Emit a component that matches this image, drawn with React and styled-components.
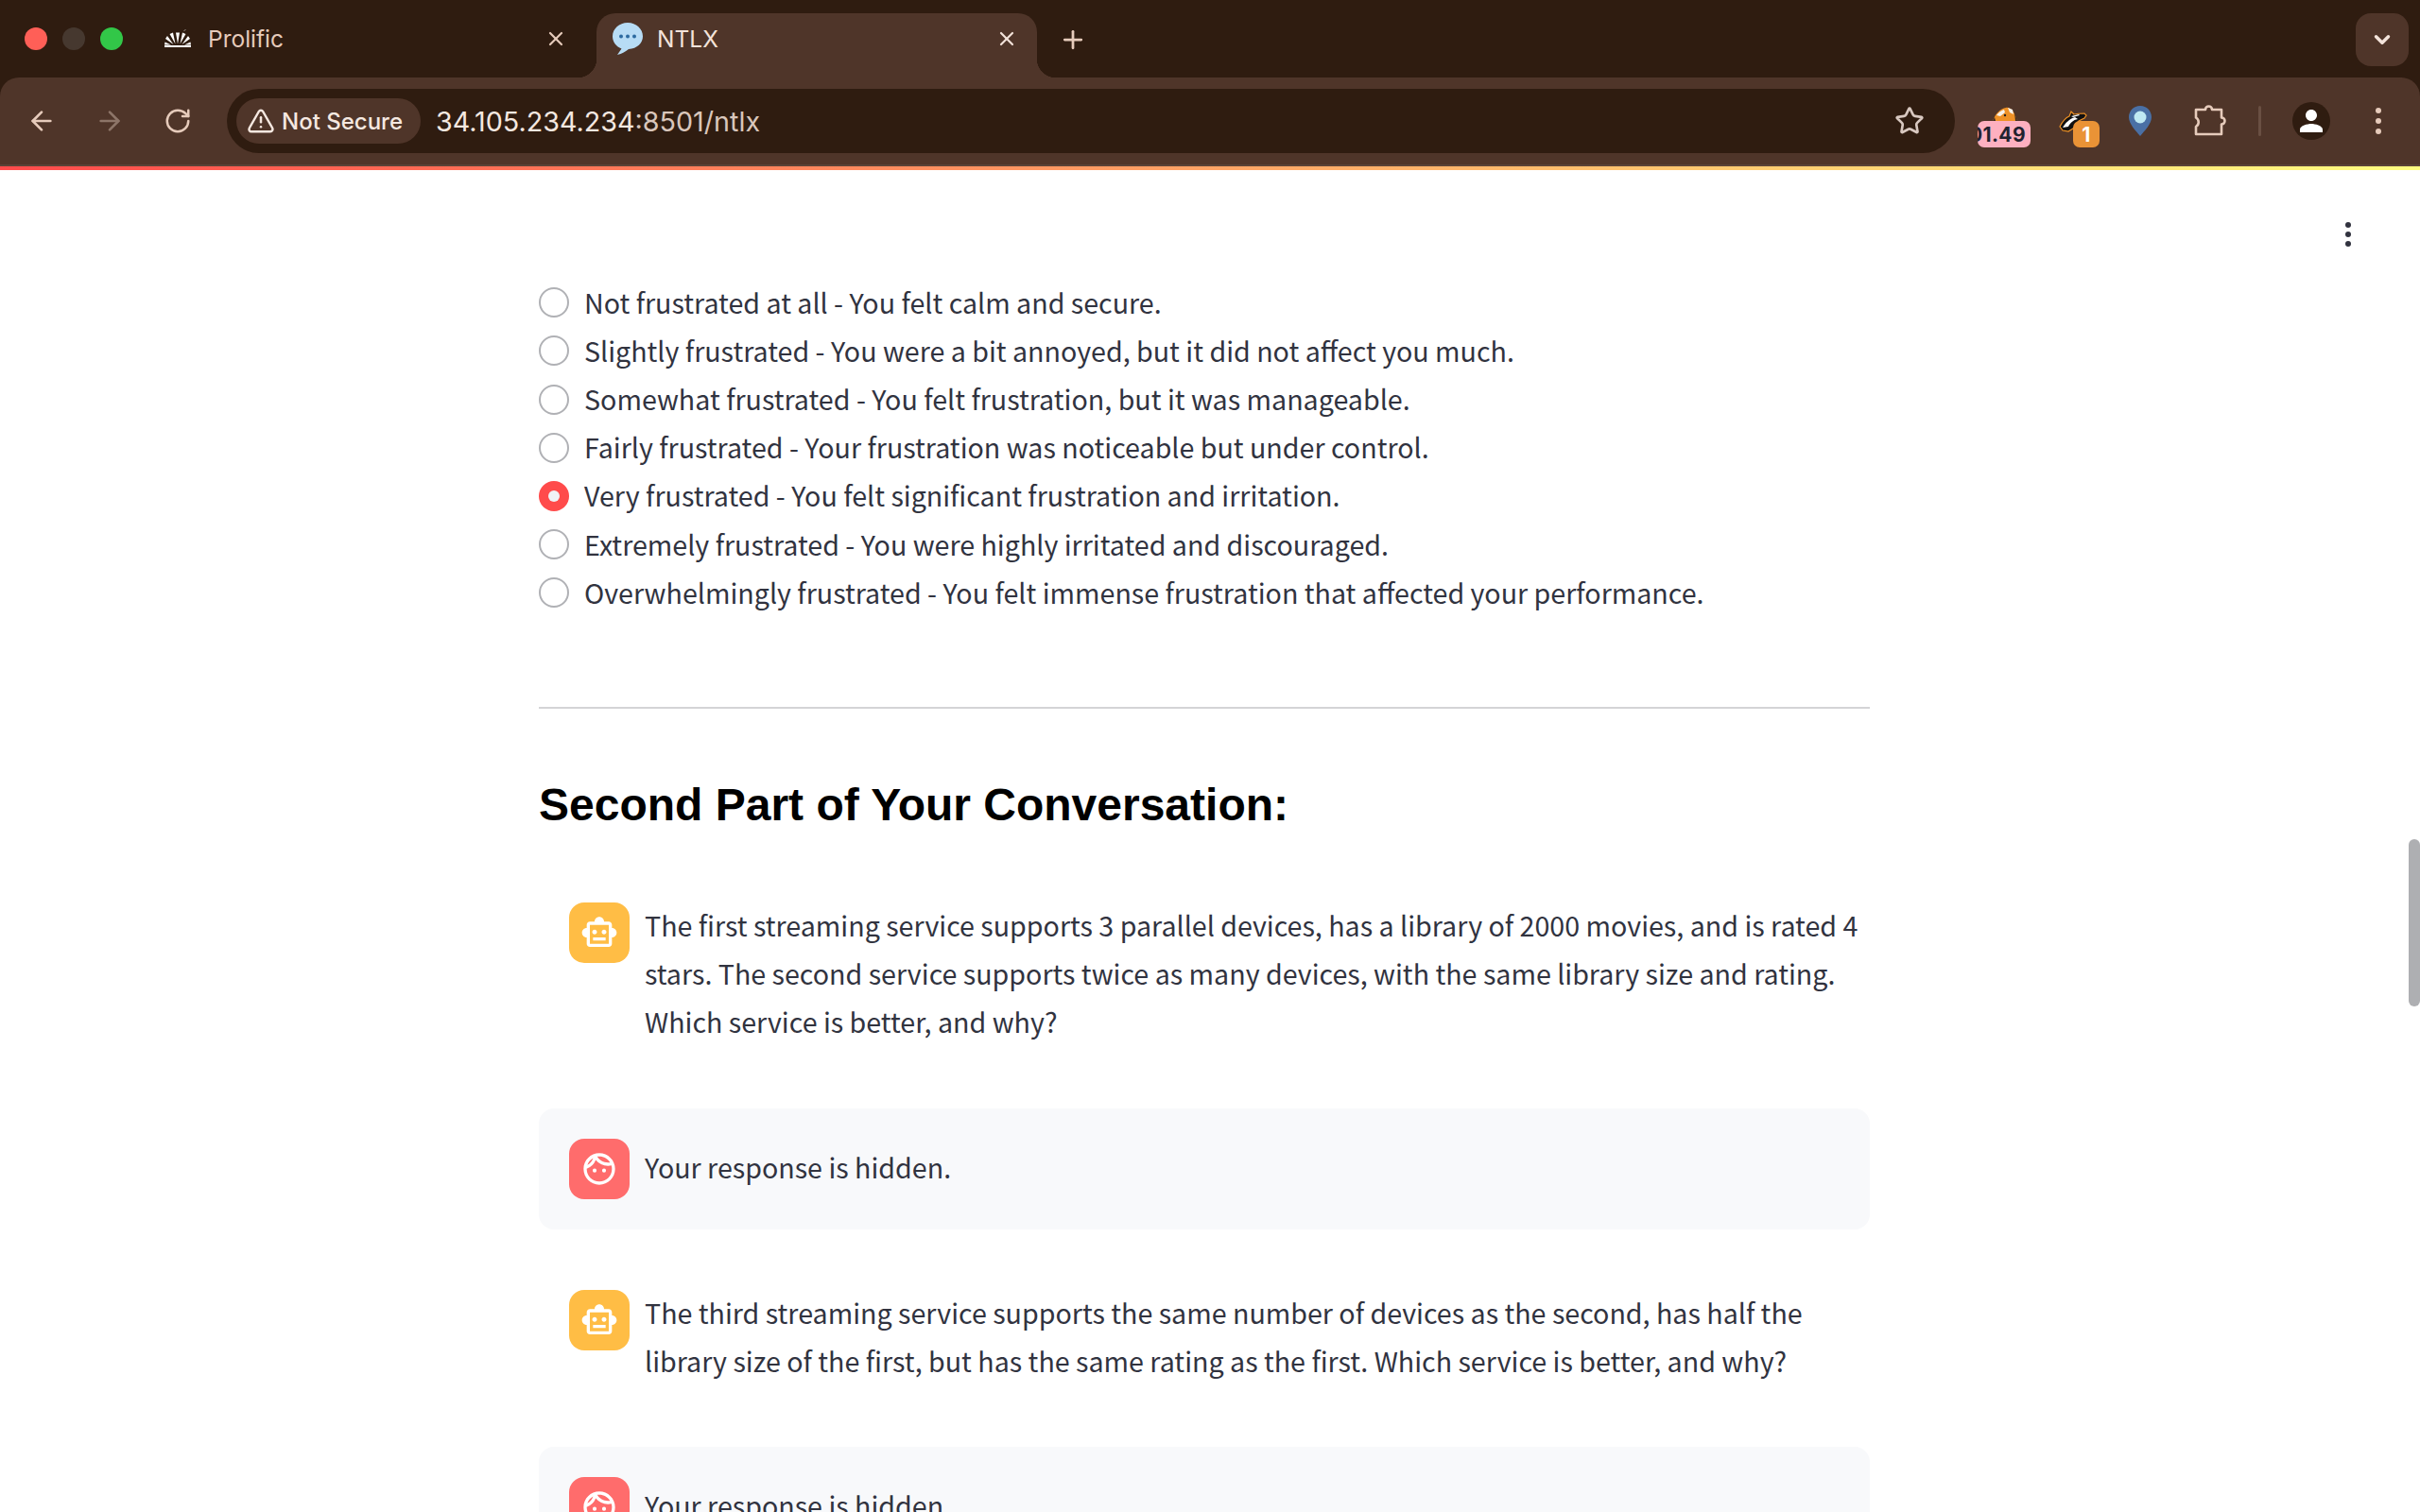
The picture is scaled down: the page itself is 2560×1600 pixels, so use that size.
import React from 'react'
import styled, { createGlobalStyle } from 'styled-components'
import { ArrowLeft, ArrowRight, RotateCw, Star, X, Plus, ChevronDown, TriangleAlert } from 'lucide-react'
import { MdOutlineSmartToy, MdOutlineFace, MdPerson } from 'react-icons/md'

const GlobalStyle = createGlobalStyle`
  html, body { margin: 0; padding: 0; height: 100%; background: #fff; overflow: hidden; }
  * { box-sizing: border-box; }
`

const Page = styled.div`
  position: relative;
  width: 2560px;
  height: 1600px;
  overflow: hidden;
  display: flex;
  flex-direction: column;
  background: #fff;
`

const Chrome = styled.div`
  flex: none;
  height: 176px;
  display: flex;
  flex-direction: column;
  background: #2f1c10;
  font-family: Inter, sans-serif;
`

const TabStrip = styled.div`
  height: 82px;
  display: flex;
  align-items: flex-start;
  padding-left: 26px;
`

const Lights = styled.div`
  display: flex;
  gap: 16px;
  padding-top: 29px;
  margin-right: 21px;
`

const Light = styled.div`
  width: 24px;
  height: 24px;
  border-radius: 50%;
  background: ${p => p.$color};
`

const Tab = styled.div`
  position: relative;
  width: ${p => p.$width}px;
  height: 68px;
  margin-top: 14px;
  margin-left: ${p => p.$gap || 0}px;
  display: flex;
  align-items: center;
  padding: ${p => (p.$active ? '0 20px 14px 16px' : '0 25px 14px 22px')};
  border-radius: 20px 20px 0 0;
  color: ${p => (p.$active ? '#f3e3da' : '#e6cbbb')};
  background: ${p => (p.$active ? '#4f3529' : 'transparent')};
  ${p => p.$active && `
    &::before, &::after {
      content: '';
      position: absolute;
      bottom: 0;
      width: 20px;
      height: 20px;
    }
    &::before { left: -20px; background: radial-gradient(circle at 0 0, transparent 20px, #4f3529 20.5px); }
    &::after { right: -20px; background: radial-gradient(circle at 100% 0, transparent 20px, #4f3529 20.5px); }
  `}
`

const TabTitle = styled.span`
  flex: 1;
  margin-left: ${p => p.$offset}px;
  font-size: 24.5px;
  line-height: 30px;
`

const TabClose = styled.span`
  display: flex;
  color: ${p => (p.$active ? '#f3e3da' : '#e6cbbb')};
`

const NewTab = styled.div`
  display: flex;
  margin: 27px 0 0 23px;
  color: #e6cbbb;
`

const TabMenu = styled.div`
  margin: 14px 12px 0 auto;
  width: 56px;
  height: 56px;
  border-radius: 16px;
  background: #4f3529;
  color: #f3e3da;
  display: flex;
  align-items: center;
  justify-content: center;
`

const Toolbar = styled.div`
  height: 94px;
  display: flex;
  align-items: flex-start;
  background: #4f3529;
  border-radius: 20px 20px 0 0;
  padding: 12px 0 0 24px;
  border-bottom: 2px solid #5a4236;
`

const NavButton = styled.div`
  width: 40px;
  height: 68px;
  margin-right: ${p => p.$gap}px;
  display: flex;
  align-items: center;
  justify-content: center;
  color: ${p => (p.$dim ? '#8d7568' : '#e6cbbb')};
`

const Omnibox = styled.div`
  width: 1828px;
  height: 68px;
  display: flex;
  align-items: center;
  padding: 0 32px 0 10px;
  border-radius: 34px;
  background: #2f1c10;
`

const SecurityChip = styled.div`
  width: 195px;
  height: 48px;
  display: flex;
  align-items: center;
  gap: 7px;
  padding-left: 11px;
  border-radius: 24px;
  background: #4f3529;
  color: #f5e8e0;
  font-size: 24px;
  font-weight: 500;
`

const Url = styled.div`
  flex: 1;
  margin-left: 16px;
  color: #f5e8e0;
  font-size: 28.7px;
`

const UrlPath = styled.span`
  color: #d9c6bb;
`

const StarButton = styled.div`
  display: flex;
  color: #d8c8c0;
`

const Extensions = styled.div`
  flex: 1;
  height: 68px;
  display: flex;
  align-items: center;
`

const ExtSlot = styled.div`
  position: relative;
  flex: none;
  width: ${p => p.$width}px;
  height: 68px;
  margin-left: ${p => p.$gap}px;
  display: flex;
  align-items: ${p => (p.$top ? 'flex-start' : 'center')};
  justify-content: center;
`

const ExtArt = styled.div`
  display: flex;
  margin: ${p => p.$margin};
`

const Badge = styled.div`
  position: absolute;
  right: 0;
  bottom: 6px;
  height: 28px;
  width: ${p => p.$width}px;
  display: flex;
  align-items: center;
  justify-content: ${p => (p.$center ? 'center' : 'flex-end')};
  padding-right: ${p => (p.$center ? 0 : 5)}px;
  overflow: hidden;
  border-radius: 7px;
  background: ${p => p.$bg};
  color: ${p => p.$color};
  font-size: 21px;
  font-weight: 700;
  letter-spacing: 0.4px;
`

const Divider = styled.div`
  width: 3px;
  height: 32px;
  margin-left: 33px;
  border-radius: 2px;
  background: #6a5043;
`

const Avatar = styled.div`
  width: 40px;
  height: 40px;
  margin-left: 33px;
  border-radius: 50%;
  background: #2f1c10;
  color: #fff;
  display: flex;
  align-items: center;
  justify-content: center;
`

const DotsColumn = styled.div`
  display: flex;
  flex-direction: column;
  gap: ${p => p.$gap}px;
  margin-left: ${p => p.$left || 0}px;
`

const Dot = styled.div`
  width: ${p => p.$size}px;
  height: ${p => p.$size}px;
  border-radius: 50%;
  background: ${p => p.$color};
`

const AccentLine = styled.div`
  flex: none;
  height: 4px;
  background: linear-gradient(90deg, #ff4b4b, #fffd80);
`

const MenuButton = styled.div`
  position: absolute;
  left: 2481px;
  top: 235px;
`

const ScrollThumb = styled.div`
  position: absolute;
  left: 2548px;
  top: 888px;
  width: 12px;
  height: 177px;
  border-radius: 6px;
  background: #aeafb2;
`

const Main = styled.div`
  flex: 1;
  min-height: 0;
  width: 1408px;
  margin-left: 570px;
  padding-top: 114.6px;
  font-family: 'Noto Sans CJK SC', sans-serif;
  font-size: 28.64px;
  color: #31333f;
`

const RadioList = styled.div`
  display: flex;
  flex-direction: column;
`

const RadioRow = styled.div`
  height: 51.2px;
  display: flex;
  align-items: center;
  gap: 16px;
  line-height: 51.2px;
`

const RadioLabel = styled.span`
  margin-top: -2px;
`

const RadioMark = styled.div`
  flex: none;
  width: 32px;
  height: 32px;
  border-radius: 50%;
  display: flex;
  align-items: center;
  justify-content: center;
  border: ${p => (p.$checked ? 'none' : '2px solid #b0b1b5')};
  background: ${p => (p.$checked ? '#ff4b4b' : '#fff')};
`

const RadioPip = styled.div`
  width: 12px;
  height: 12px;
  border-radius: 50%;
  background: #f0f2f6;
`

const Rule = styled.hr`
  margin: 95.4px 0 0;
  border: none;
  height: 2px;
  background: #d4d4d6;
`

const Heading = styled.h2`
  margin: 64px 0 32.6px;
  font-family: 'Liberation Sans', Arial, sans-serif;
  font-weight: 700;
  font-size: 48px;
  line-height: 76px;
  color: #000;
`

const Message = styled.div`
  display: flex;
  align-items: ${p => (p.$user ? 'center' : 'flex-start')};
  gap: 16px;
  padding: 32px 8px 32px 32px;
  margin-bottom: 32px;
  border-radius: 16px;
  background: ${p => (p.$user ? '#f8f9fb' : 'transparent')};
`

const MessageAvatar = styled.div`
  flex: none;
  width: 64px;
  height: 64px;
  border-radius: 16px;
  display: flex;
  align-items: center;
  justify-content: center;
  color: #fff;
  background: ${p => (p.$user ? '#ff6c6c' : '#ffbd45')};
`

const MessageText = styled.div`
  flex: 1;
  margin: -2px 0 2px;
  line-height: 51.2px;
`

const options = [
  'Not frustrated at all - You felt calm and secure.',
  'Slightly frustrated - You were a bit annoyed, but it did not affect you much.',
  'Somewhat frustrated - You felt frustration, but it was manageable.',
  'Fairly frustrated - Your frustration was noticeable but under control.',
  'Very frustrated - You felt significant frustration and irritation.',
  'Extremely frustrated - You were highly irritated and discouraged.',
  'Overwhelmingly frustrated - You felt immense frustration that affected your performance.',
]

const messages = [
  { text: 'The first streaming service supports 3 parallel devices, has a library of 2000 movies, and is rated 4 stars. The second service supports twice as many devices, with the same library size and rating. Which service is better, and why?' },
  { user: true, text: 'Your response is hidden.' },
  { text: 'The third streaming service supports the same number of devices as the second, has half the library size of the first, but has the same rating as the first. Which service is better, and why?' },
  { user: true, text: 'Your response is hidden.' },
]

const ProlificIcon = () => (
  <svg width="30" height="20" viewBox="0 0 30 20" fill="#fff">
    <path d="M1 17h28v2H1z" />
    <path d="M15 15.500l-2-12h4zM12.500 15.500L6.500 5l3.500-1.500zM17.500 15.500l6-10.500-3.500-1.500zM10.500 16L2 10l2-3zM19.500 16l8.500-6-2-3zM8 16.500H1l.5-3z M22 16.500h7l-.5-3z" />
    <path d="M22 1.500l1-1" stroke="#fff" strokeWidth="1" />
  </svg>
)

const ChatIcon = () => (
  <svg width="34" height="36" viewBox="0 0 34 36">
    <path d="M17 1C8 1 1 7.500 1 15.500c0 6 4 11 9.500 13L6 35c5-1 9-3.500 12-6 9-.5 15-6.500 15-13.500C33 7.500 26 1 17 1z" fill="#b7dcf5" />
    <circle cx="10" cy="15.500" r="2" fill="#2c6aa0" />
    <circle cx="17" cy="15.500" r="2" fill="#2c6aa0" />
    <circle cx="24" cy="15.500" r="2" fill="#2c6aa0" />
  </svg>
)

const HamsterIcon = () => (
  <svg width="28" height="15" viewBox="0 0 28 15">
    <path d="M1 15C4 7 9 2 15 1c5-1 9 4 12 14z" fill="#ee9126" />
    <path d="M5 9c2-3 5-5 8-6l1 3-5 4zM17 1l5 2 1 5-4-2z" fill="#f6f2ec" />
    <path d="M1 15l2-4 1 4zM24 6l3 9h-2z" fill="#3a2a20" />
    <circle cx="14" cy="9" r="1.200" fill="#222" />
  </svg>
)

const BadgerIcon = () => (
  <svg width="32" height="24" viewBox="0 0 32 24">
    <path d="M2 18C4 14 7 9 12 7l2-5 3 3c4-1 8-1 11-1l2 2-2 3-6 3-6 8-5 3-6-1z" fill="#111" stroke="#ee9126" strokeWidth="1.200" />
    <path d="M5 19c3-5 7-9 13-11l3 2c-5 1-8 4-10 8z" fill="#fff" />
    <path d="M14 7l8-2 1 1-7 2z" fill="#fff" />
  </svg>
)

const PinIcon = () => (
  <svg width="24" height="32" viewBox="0 0 24 32">
    <path d="M12 0C5 0 0 5.500 0 12c0 7 7 14 12 20 5-6 12-13 12-20C24 5.500 19 0 12 0z" fill="#4a70a5" />
    <circle cx="12" cy="12" r="6.500" fill="#bfe9f3" />
  </svg>
)

const PuzzleIcon = () => (
  <svg width="34" height="34" viewBox="0 0 34 34" fill="none" stroke="#e6cbbb" strokeWidth="2.600" strokeLinejoin="round">
    <path d="M2 6h10a3.500 3.500 0 0 1 7 0h10v8.500a3.500 3.500 0 0 1 0 7V32H2v-8a5.500 5.500 0 0 0 0-9.500z" transform="translate(0 -1)" />
  </svg>
)

export default function App() {
  return (
    <Page>
      <GlobalStyle />
      <Chrome>
        <TabStrip>
          <Lights>
            <Light $color="#ff5f57" />
            <Light $color="#46382f" />
            <Light $color="#32c748" />
          </Lights>
          <Tab $width={474}>
            <ProlificIcon />
            <TabTitle $offset={17}>Prolific</TabTitle>
            <TabClose><X size={24} strokeWidth={2.2} /></TabClose>
          </Tab>
          <Tab $width={466} $active $gap={6}>
            <ChatIcon />
            <TabTitle $offset={14}>NTLX</TabTitle>
            <TabClose $active><X size={24} strokeWidth={2.2} /></TabClose>
          </Tab>
          <NewTab><Plus size={30} strokeWidth={2.2} /></NewTab>
          <TabMenu><ChevronDown size={26} strokeWidth={3.2} /></TabMenu>
        </TabStrip>
        <Toolbar>
          <NavButton $gap={32}><ArrowLeft size={32} strokeWidth={2} /></NavButton>
          <NavButton $gap={32} $dim><ArrowRight size={32} strokeWidth={2} /></NavButton>
          <NavButton $gap={32}><RotateCw size={30} strokeWidth={2} /></NavButton>
          <Omnibox>
            <SecurityChip><TriangleAlert size={30} strokeWidth={2} />Not Secure</SecurityChip>
            <Url>34.105.234.234<UrlPath>:8501/ntlx</UrlPath></Url>
            <StarButton><Star size={32} strokeWidth={2} /></StarButton>
          </Omnibox>
          <Extensions>
            <ExtSlot $width={56} $gap={24} $top>
              <ExtArt $margin="19px 0 0 2px"><HamsterIcon /></ExtArt>
              <Badge $width={56} $bg="#fdb0c0" $color="#22222f">01.49</Badge>
            </ExtSlot>
            <ExtSlot $width={44} $gap={29} $top>
              <ExtArt $margin="22px 12px 0 0"><BadgerIcon /></ExtArt>
              <Badge $width={28} $center $bg="#ea9336" $color="#fff">1</Badge>
            </ExtSlot>
            <ExtSlot $width={32} $gap={27}><PinIcon /></ExtSlot>
            <ExtSlot $width={36} $gap={40}><PuzzleIcon /></ExtSlot>
            <Divider />
            <Avatar><MdPerson size={36} /></Avatar>
            <DotsColumn $gap={5} $left={48}>
              <Dot $size={6} $color="#e6cbbb" />
              <Dot $size={6} $color="#e6cbbb" />
              <Dot $size={6} $color="#e6cbbb" />
            </DotsColumn>
          </Extensions>
        </Toolbar>
      </Chrome>
      <AccentLine />
      <MenuButton>
        <DotsColumn $gap={4}>
          <Dot $size={6} $color="#31333f" />
          <Dot $size={6} $color="#31333f" />
          <Dot $size={6} $color="#31333f" />
        </DotsColumn>
      </MenuButton>
      <ScrollThumb />
      <Main>
        <RadioList>
          {options.map((label, i) => (
            <RadioRow key={label}>
              <RadioMark $checked={i === 4}>{i === 4 && <RadioPip />}</RadioMark>
              <RadioLabel>{label}</RadioLabel>
            </RadioRow>
          ))}
        </RadioList>
        <Rule />
        <Heading>Second Part of Your Conversation:</Heading>
        {messages.map((m, i) => (
          <Message key={i} $user={m.user}>
            <MessageAvatar $user={m.user}>
              {m.user ? <MdOutlineFace size={40} /> : <MdOutlineSmartToy size={40} />}
            </MessageAvatar>
            <MessageText>{m.text}</MessageText>
          </Message>
        ))}
      </Main>
    </Page>
  )
}
